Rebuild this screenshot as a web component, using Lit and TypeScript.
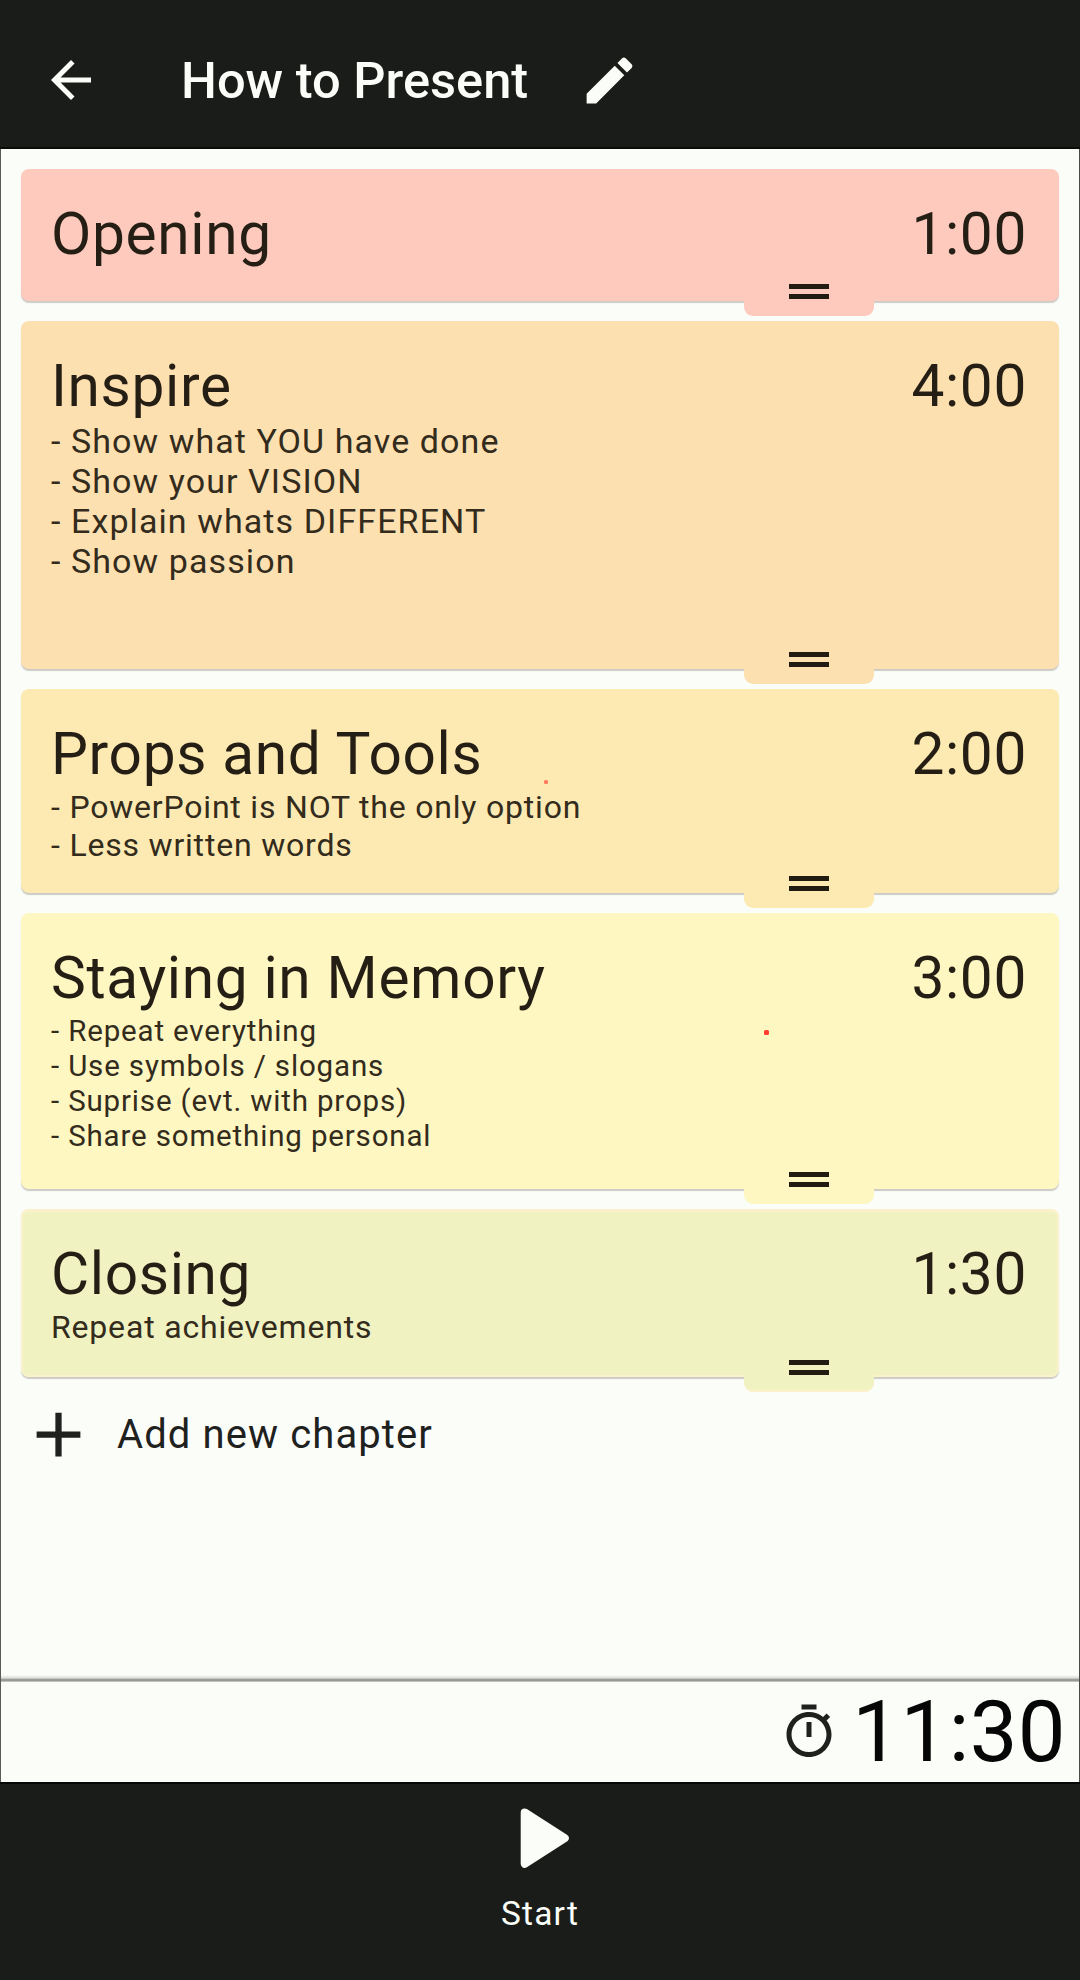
import { LitElement, html, css, nothing } from "lit";
import { customElement, property } from "lit/decorators.js";
import { classMap } from "lit/directives/class-map.js";
import { styleMap } from "lit/directives/style-map.js";

interface Chapter {
  title: string;
  time: string;
  color: string;
  height: number;
  rim?: boolean;
  notes?: { size: number; line: number; spacing: number; gap: number; lines: string[] };
  dot?: { x: number; y: number; size: number; color: string };
}

const chapters: Chapter[] = [
  { title: "Opening", time: "1:00", color: "#fdcabd", height: 132 },
  {
    title: "Inspire", time: "4:00", color: "#fde0b0", height: 348,
    notes: {
      size: 34, line: 40, spacing: 1.09, gap: 1,
      lines: ["- Show what YOU have done", "- Show your VISION", "- Explain whats DIFFERENT", "- Show passion"],
    },
  },
  {
    title: "Props and Tools", time: "2:00", color: "#fdeab2", height: 204,
    notes: {
      size: 32, line: 38, spacing: 0.8, gap: 0,
      lines: ["- PowerPoint is NOT the only option", "- Less written words"],
    },
    dot: { x: 523, y: 91, size: 4, color: "#ff7a5c" },
  },
  {
    title: "Staying in Memory", time: "3:00", color: "#fef7c2", height: 276,
    notes: {
      size: 29.5, line: 35, spacing: 0.84, gap: 2,
      lines: ["- Repeat everything", "- Use symbols / slogans", "- Suprise (evt. with props)", "- Share something personal"],
    },
    dot: { x: 742.5, y: 116.5, size: 5, color: "#ff3b30" },
  },
  {
    title: "Closing", time: "1:30", color: "#f1f2c2", height: 168, rim: true,
    notes: { size: 32, line: 38, spacing: 0.82, gap: 0, lines: ["Repeat achievements"] },
  },
];

@customElement("chapter-card")
class ChapterCard extends LitElement {
  @property({ attribute: false }) chapter!: Chapter;

  static styles = css`
    :host {
      display: block;
    }
    .card {
      position: relative;
      box-sizing: border-box;
      padding: 31px 32px 0 30px;
      border-radius: 8px;
      box-shadow: 0 2px 1px rgba(60, 50, 40, 0.24);
      color: #251e15;
    }
    .rim {
      box-shadow: inset 0 3px 1px #fbf1cb, inset 0 0 0 2px #faf2cb, 0 2px 1px rgba(60, 50, 40, 0.24);
    }
    .head {
      display: flex;
      justify-content: space-between;
      font-size: 58.6px;
      line-height: 68px;
      letter-spacing: 0.66px;
      white-space: nowrap;
    }
    .note {
      color: #332b1c;
      white-space: nowrap;
    }
    .tab {
      position: absolute;
      left: 723px;
      bottom: -15px;
      box-sizing: border-box;
      width: 130px;
      height: 36px;
      padding-top: 4px;
      border-radius: 0 0 9px 9px;
      display: flex;
      flex-direction: column;
      align-items: center;
      gap: 5px;
    }
    .rim .tab {
      box-shadow: inset 0 -3px 1px -1px #fbf1cb;
    }
    .bar {
      width: 40px;
      height: 5px;
      background: #211b12;
    }
    .dot {
      position: absolute;
      border-radius: 1.5px;
    }
  `;

  render() {
    const { title, time, color, height, rim, notes, dot } = this.chapter;
    return html`
      <div class=${classMap({ card: true, rim: !!rim })} style=${styleMap({ height: `${height}px`, background: color })}>
        <div class="head"><span>${title}</span><span>${time}</span></div>
        ${notes
          ? html`<div
              style=${styleMap({
                fontSize: `${notes.size}px`,
                lineHeight: `${notes.line}px`,
                letterSpacing: `${notes.spacing}px`,
                marginTop: `${notes.gap}px`,
              })}
            >
              ${notes.lines.map((l) => html`<div class="note">${l}</div>`)}
            </div>`
          : nothing}
        <div class="tab" style=${styleMap({ background: color })}>
          <div class="bar"></div>
          <div class="bar"></div>
        </div>
        ${dot
          ? html`<div
              class="dot"
              style=${styleMap({
                left: `${dot.x}px`,
                top: `${dot.y}px`,
                width: `${dot.size}px`,
                height: `${dot.size}px`,
                background: dot.color,
              })}
            ></div>`
          : nothing}
      </div>
    `;
  }
}

@customElement("app-root")
class AppRoot extends LitElement {
  static styles = css`
    :host {
      display: flex;
      flex-direction: column;
      width: 1080px;
      height: 1980px;
      overflow: hidden;
      background: #1a1c19;
      font-family: Roboto, "Liberation Sans", sans-serif;
      color: #1f211e;
    }
    .top {
      flex: none;
      box-sizing: border-box;
      height: 149px;
      display: flex;
      align-items: center;
      padding: 13px 0 0 41px;
      border-bottom: 2px solid #0b0c0a;
      color: #fbfdf9;
    }
    .title {
      margin: 2px 51px 0 80px;
      font-size: 50.6px;
      font-weight: 500;
      line-height: 60px;
      white-space: nowrap;
    }
    svg {
      display: block;
      flex: none;
      fill: currentColor;
    }
    .main {
      flex: 1;
      box-sizing: border-box;
      display: flex;
      flex-direction: column;
      gap: 20px;
      padding: 20px 20px 0;
      background: #fbfdf9;
      border-left: 1px solid #5a5b59;
      border-right: 1px solid #4a4b49;
    }
    .add {
      display: flex;
      align-items: center;
      gap: 21px;
      font-size: 40px;
      letter-spacing: 1.1px;
    }
    .shade {
      margin: auto -20px 0;
      height: 7px;
      background: linear-gradient(#fbfdf9, #d9dbd8 45%, #989a97 65%, #989a97 85%, #e3e5e2);
    }
    .total {
      flex: none;
      box-sizing: border-box;
      height: 100px;
      display: flex;
      align-items: center;
      justify-content: flex-end;
      gap: 13px;
      padding-right: 13px;
      background: #fbfdf9;
      border-left: 1px solid #5a5b59;
      border-right: 1px solid #4a4b49;
    }
    .clock {
      color: #050605;
      font-size: 85px;
      line-height: 100px;
      letter-spacing: 0.4px;
    }
    .bottom {
      flex: none;
      box-sizing: border-box;
      height: 198px;
      display: flex;
      flex-direction: column;
      align-items: center;
      gap: 26px;
      padding-top: 24px;
      border-top: 2px solid #060706;
      color: #fbfdf9;
      font-size: 33.5px;
      line-height: 40px;
      letter-spacing: 1.2px;
    }
    .play {
      stroke: currentColor;
      stroke-width: 8;
      stroke-linejoin: round;
    }
  `;

  render() {
    return html`
      <header class="top">
        <svg width="60" height="60" viewBox="0 0 24 24">
          <path d="M20 11H7.83l5.59-5.59L12 4l-8 8 8 8 1.41-1.41L7.83 13H20v-2z" />
        </svg>
        <div class="title">How to Present</div>
        <svg width="61" height="61" viewBox="0 0 24 24">
          <path
            d="M3 17.25V21h3.75L17.81 9.94l-3.75-3.75L3 17.25zM20.71 7.04c.39-.39.39-1.02 0-1.41l-2.34-2.34c-.39-.39-1.02-.39-1.41 0l-1.83 1.83 3.75 3.75 1.83-1.83z"
          />
        </svg>
      </header>
      <main class="main">
        ${chapters.map((c) => html`<chapter-card .chapter=${c}></chapter-card>`)}
        <div class="add">
          <svg width="75" height="75" viewBox="0 0 24 24"><path d="M19 13h-6v6h-2v-6H5v-2h6V5h2v6h6v2z" /></svg>
          <span>Add new chapter</span>
        </div>
        <div class="shade"></div>
      </main>
      <section class="total">
        <svg width="60" height="60" viewBox="0 0 24 24">
          <path
            d="M15 1H9v2h6V1zm-4 13h2V8h-2v6zm8.03-6.61l1.42-1.42c-.43-.51-.9-.99-1.41-1.41l-1.42 1.42C16.07 4.74 14.12 4 12 4c-4.97 0-9 4.03-9 9s4.02 9 9 9 9-4.03 9-9c0-2.12-.74-4.07-1.97-5.61zM12 20c-3.87 0-7-3.13-7-7s3.13-7 7-7 7 3.13 7 7-3.13 7-7 7z"
          />
        </svg>
        <span class="clock">11:30</span>
      </section>
      <footer class="bottom">
        <svg class="play" width="60" height="60" viewBox="0 0 60 60"><path d="M14.7 4.4L54.8 30.2L14.7 55.8z" /></svg>
        <span>Start</span>
      </footer>
    `;
  }
}
